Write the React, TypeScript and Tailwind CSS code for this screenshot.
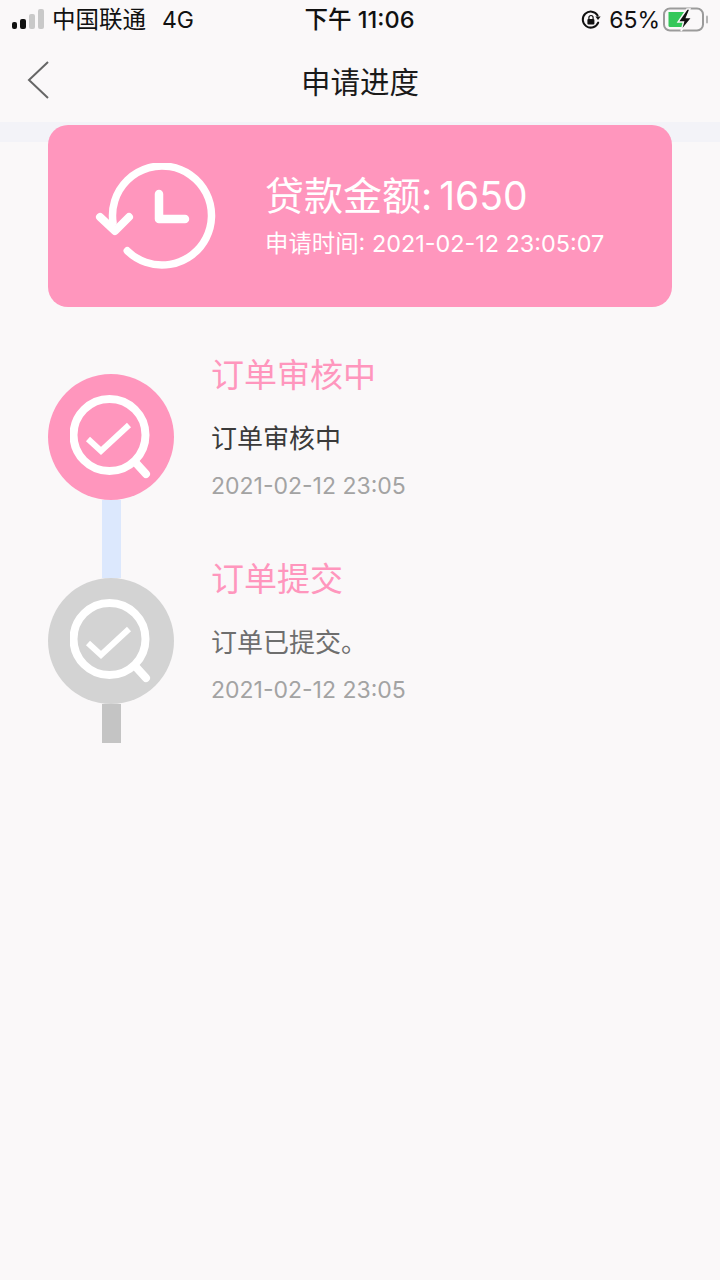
import React from "react";

const font = { fontFamily: '"Inter","Noto Sans CJK SC",sans-serif' };

function Signal() {
  return (
    <svg width="33" height="22" viewBox="0 0 33 22" className="block">
      <rect x="0" y="13" width="5" height="7" rx="2" fill="#111" />
      <rect x="8" y="10" width="6" height="10" rx="2" fill="#111" />
      <rect x="17" y="5" width="6" height="15" rx="2" fill="#c9c9c9" />
      <rect x="26" y="0" width="6" height="20" rx="2" fill="#c9c9c9" />
    </svg>
  );
}

function RotationLock() {
  return (
    <svg width="22" height="22" viewBox="0 0 22 22" className="block">
      <path d="M18.2 13.6A8 8 0 1 1 17.6 6.4" fill="none" stroke="#111" strokeWidth="2" strokeLinecap="round" />
      <path d="M15.4 7.6L20.6 7.6L18 11Z" fill="#111" />
      <rect x="7.4" y="10" width="7" height="5.6" rx="1" fill="#111" />
      <path d="M8.9 10V8.6a2.1 2.1 0 0 1 4.2 0V10" fill="none" stroke="#111" strokeWidth="1.2" />
    </svg>
  );
}

function Battery() {
  return (
    <svg width="46" height="26" viewBox="0 0 46 26" className="block">
      <rect x="1" y="1.5" width="39" height="22" rx="6" fill="none" stroke="#9b9b9b" strokeWidth="2" />
      <rect x="43" y="8.5" width="2" height="8" rx="1" fill="#b5b5b5" />
      <path d="M5.5 5H22V20H7a1.5 1.5 0 0 1-1.5-1.5Z" fill="#34c759" />
      <path d="M24 2L15 15H20.5L18 24L29 10.5H23.5L27 2Z" fill="#111" stroke="#faf8f9" strokeWidth="1.4" />
    </svg>
  );
}

function HistoryIcon() {
  return (
    <svg width="122" height="106" viewBox="0 0 122 106" className="block">
      <g fill="none" stroke="#fff" strokeLinecap="round" strokeLinejoin="round">
        <path d="M18 59.5A49.5 49.5 0 1 1 32.3 87.8" strokeWidth="7.5" />
        <path d="M5 54L20 68L34 54" strokeWidth="8" />
        <path d="M64 31V56H90" strokeWidth="8.5" />
      </g>
    </svg>
  );
}

function SearchCheck() {
  return (
    <svg width="82" height="84" viewBox="0 0 82 84" className="block">
      <g fill="none" stroke="#fff" strokeLinecap="round">
        <circle cx="39.5" cy="40" r="36" strokeWidth="8" />
        <path d="M66 68L76 79" strokeWidth="8" />
        <path d="M18 44L31 56L59 30" strokeWidth="6" strokeLinecap="butt" />
      </g>
    </svg>
  );
}

function Step({
  circle,
  line,
  lineHeight,
  title,
  body,
  bodyColor,
}: {
  circle: string;
  line: string;
  lineHeight: string;
  title: string;
  body: string;
  bodyColor: string;
}) {
  return (
    <div className="flex">
      <div className="flex w-[126px] flex-col items-center">
        <div className={`flex h-[126px] w-[126px] items-center justify-center rounded-full ${circle}`}>
          <SearchCheck />
        </div>
        <div className={`w-[19px] ${line} ${lineHeight}`} />
      </div>
      <div className="ml-[37px] -mt-[17px] flex flex-col">
        <div className="h-[36px] text-[33px] leading-[36px] text-[#ff96bd]">{title}</div>
        <div className={`mt-[28px] h-[36px] text-[26px] leading-[36px] ${bodyColor}`}>{body}</div>
        <div className="mt-[13px] h-[32px] text-[23px] leading-[32px] text-[#a3a3a3]">2021-02-12 23:05</div>
      </div>
    </div>
  );
}

export default function App() {
  return (
    <div className="min-h-[1280px] w-[720px] bg-[#faf8f9]" style={font}>
      <div className="flex h-[40px] items-center justify-between pl-[12px] pr-[11px] text-[23.5px] text-[#111]">
        <div className="flex w-[240px] items-center">
          <Signal />
          <span className="ml-[7px]">中国联通</span>
          <span className="ml-[16px] text-[23px]">4G</span>
        </div>
        <div className="-ml-[2px] font-medium">下午 11:06</div>
        <div className="flex w-[240px] items-center justify-end">
          <RotationLock />
          <span className="ml-[7px] mr-[3px] text-[23px]">65%</span>
          <Battery />
        </div>
      </div>
      <div className="relative flex h-[82px] items-center justify-center pt-[2px]">
        <svg width="24" height="40" viewBox="0 0 24 40" className="absolute left-[26px] top-[20px]">
          <path d="M22 2L3 20L22 38" fill="none" stroke="#666" strokeWidth="2" />
        </svg>
        <span className="text-[29.5px] text-[#1a1a1a]">申请进度</span>
      </div>
      <div className="h-[20px] bg-[#f3f3f8]" />
      <div className="mx-[48px] -mt-[17px] flex h-[182px] items-center rounded-[20px] bg-[#ff96bd] pl-[47px] text-white">
        <HistoryIcon />
        <div className="ml-[48px] flex flex-col">
          <div className="h-[48px] text-[39px] leading-[48px]">
            贷款金额<span className="tracking-[-2px]">: </span>1650
          </div>
          <div className="mt-[8px] h-[32px] text-[23.4px] leading-[32px]">申请时间: 2021-02-12 23:05:07</div>
        </div>
      </div>
      <div className="mx-[48px] mt-[67px] flex flex-col">
        <Step
          circle="bg-[#ff96bd]"
          line="bg-[#dce8fd]"
          lineHeight="h-[78px]"
          title="订单审核中"
          body="订单审核中"
          bodyColor="text-[#3a3a3a]"
        />
        <Step
          circle="bg-[#d3d3d3]"
          line="bg-[#c4c4c4]"
          lineHeight="h-[39px]"
          title="订单提交"
          body="订单已提交。"
          bodyColor="text-[#6e6e6e]"
        />
      </div>
    </div>
  );
}
